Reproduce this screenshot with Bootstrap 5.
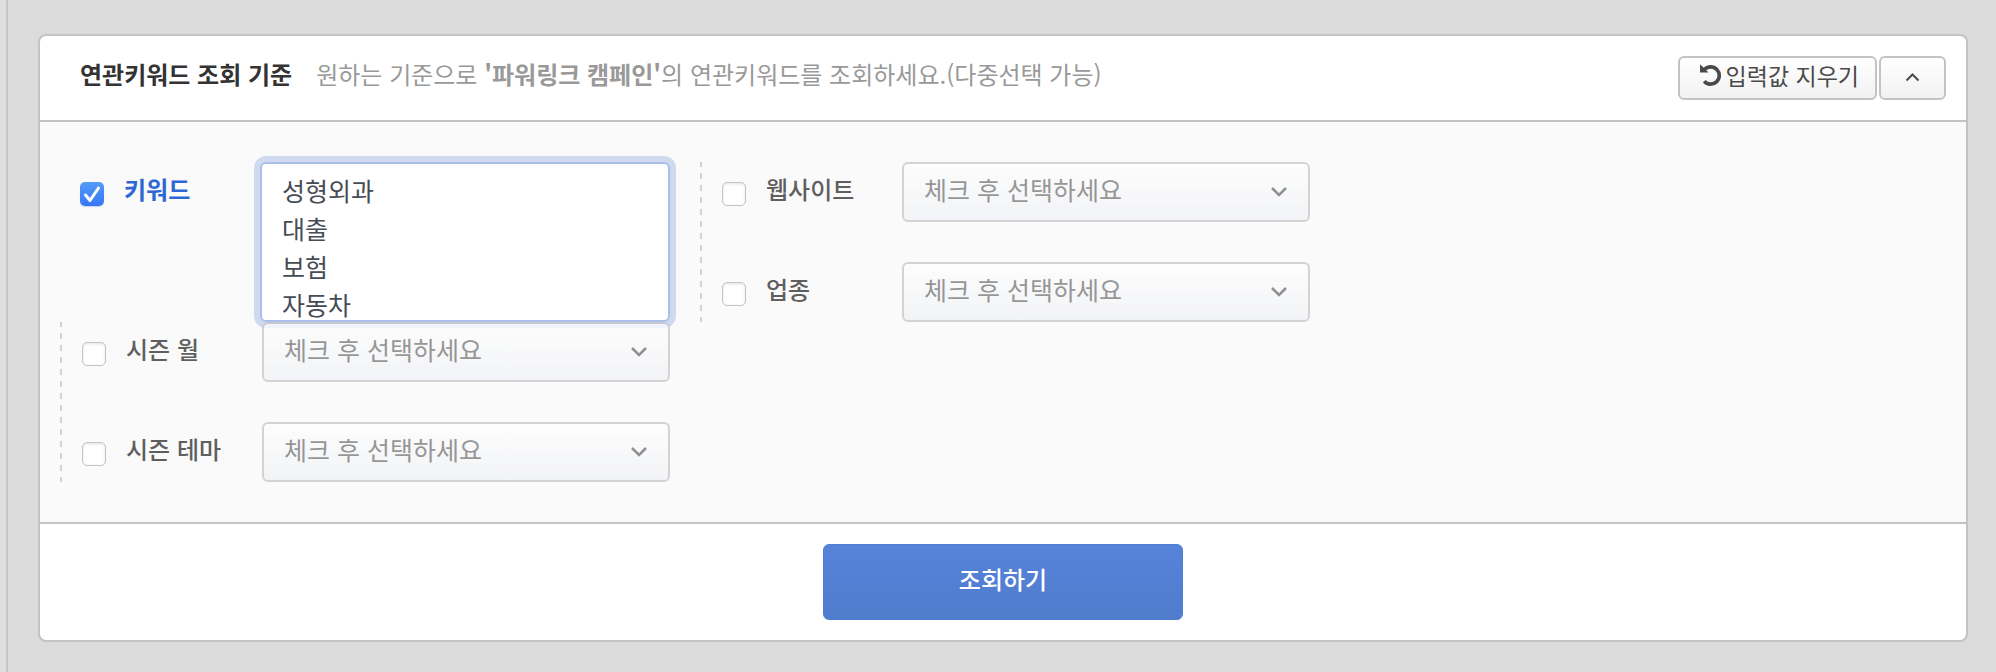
<!DOCTYPE html>
<html lang="ko">
<head>
<meta charset="utf-8">
<meta name="viewport" content="width=device-width, initial-scale=1">
<title>연관키워드 조회 기준</title>
<link href="https://cdn.jsdelivr.net/npm/bootstrap@5.3.0/dist/css/bootstrap.min.css" rel="stylesheet">
<style>
  :root { --line: #c3c3c3; }
  body {
    font-family: "Noto Sans CJK KR", sans-serif;
    font-size: 24px;
    line-height: 36px;
    color: #5f5f5f;
    background: #dbdbdb;
  }
  .side-edge { width: 8px; background: #e0dedb; border-right: 2px solid #c6c6c6; }
  .page-main { padding: 34px 28px 30px 30px; }
  .panel { border: 2px solid var(--line); border-radius: 8px; background: #fff; }
  .panel-head { padding: 20px 20px 20px 40px; border-bottom: 2px solid var(--line); }
  .panel-text { column-gap: 24px; }
  .panel-title { font-size: 24px; line-height: 36px; font-weight: 700; color: #333; }
  .panel-desc { color: #999; }
  .head-actions { gap: 2px; }
  .tool-btn {
    height: 44px;
    padding: 0 16px 6px 20px;
    border: 2px solid var(--line);
    border-radius: 6px;
    background: linear-gradient(#fff, #f2f2f2);
    color: #4a4a4a;
    font-size: 23px;
    line-height: 34px;
  }
  .tool-btn.fold-btn { padding: 0 24px 2px; }
  .panel-filters { padding: 40px 0 40px 20px; background: #fafafa; border-bottom: 2px solid var(--line); }
  .filter-group { flex: 0 0 640px; padding: 0 30px 0 20px; gap: 40px; }
  .filter-group.divided {
    padding-left: 22px;
    background: repeating-linear-gradient(#d2d2d2 0 5px, transparent 5px 11px, #d2d2d2 11px 12px) left top / 2px 100% no-repeat;
  }
  .filter-name { flex: 0 0 180px; gap: 20px; }
  .filter-name label { line-height: 54px; font-weight: 500; }
  .filter-name .form-check-input {
    width: 24px;
    height: 24px;
    margin: 20px 0 0;
    border: 1px solid #c4c4c4;
    border-radius: 5px;
    background-color: #fff;
    box-shadow: inset 0 1px 3px rgba(0, 0, 0, .12);
  }
  .filter-name .form-check-input:checked {
    border: 0;
    background: url("data:image/svg+xml,%3Csvg xmlns='http://www.w3.org/2000/svg' viewBox='0 0 24 24'%3E%3Cpath d='M5.5 13l4.5 5.5L18.5 6' fill='none' stroke='%23fff' stroke-width='3' stroke-linecap='round' stroke-linejoin='round'/%3E%3C/svg%3E") center / 24px 24px no-repeat, linear-gradient(#549bf8, #3577f5);
    box-shadow: 0 1px 1px rgba(53, 119, 245, .3);
  }
  .filter-name input:checked + label { color: #2f66d6; font-weight: 700; }
  .keyword-box {
    height: 160px;
    padding: 7px 20px 0;
    border: 2px solid #a9c1ea;
    border-radius: 6px;
    background: #fff;
    color: #464c55;
    font-size: 25px;
    line-height: 38px;
    resize: none;
    overflow: hidden;
  }
  .keyword-box, .keyword-box:focus { box-shadow: 0 0 0 6px #cfdaef; border-color: #a9c1ea; color: #464c55; }
  .pick-box, .pick-box:disabled {
    height: 60px;
    padding: 0 56px 6px 20px;
    border: 2px solid var(--line);
    border-radius: 6px;
    background: url("data:image/svg+xml,%3Csvg xmlns='http://www.w3.org/2000/svg' viewBox='0 0 18 12'%3E%3Cpath d='M2 2l7 7 7-7' fill='none' stroke='%23666' stroke-width='2.5'/%3E%3C/svg%3E") right 20px center / 18px 12px no-repeat, linear-gradient(#fff, #eff1f5);
    color: #6c6c6c;
    font-size: 25px;
    line-height: 38px;
    opacity: .7;
  }
  .panel-foot { padding: 20px; }
  .search-btn {
    width: 360px;
    height: 76px;
    padding: 0 0 6px;
    border: 1px solid #4f7ed0;
    border-radius: 6px;
    background: linear-gradient(#5583da, #507ccc);
    color: #fff;
    font-size: 24px;
    font-weight: 500;
  }
</style>
</head>
<body>
<div class="d-flex min-vh-100">
  <div class="side-edge flex-shrink-0"></div>
  <main class="page-main flex-grow-1">
    <form class="panel overflow-hidden">
      <header class="panel-head d-flex align-items-start justify-content-between">
        <div class="panel-text d-flex flex-wrap">
          <h1 class="panel-title m-0">연관키워드 조회 기준</h1>
          <p class="panel-desc m-0">원하는 기준으로 <strong>'파워링크 캠페인'</strong>의 연관키워드를 조회하세요.(다중선택 가능)</p>
        </div>
        <div class="head-actions d-flex flex-shrink-0">
          <button type="reset" class="btn tool-btn d-flex align-items-center gap-1">
            <svg width="22" height="22" viewBox="0 0 22 22" aria-hidden="true">
              <path d="M4.5 5.5A8.6 8.6 0 1 1 4.2 17.2" fill="none" stroke="#4a4a4a" stroke-width="3.6"/>
              <path d="M0 .5l2.500 2 6 6H0z" fill="#4a4a4a"/>
            </svg>
            <span>입력값 지우기</span>
          </button>
          <button type="button" class="btn tool-btn fold-btn d-flex align-items-center" aria-label="접기">
            <svg width="15" height="10" viewBox="0 0 15 10" aria-hidden="true">
              <path d="M1.5 8.5l6-6 6 6" fill="none" stroke="#4a4a4a" stroke-width="2"/>
            </svg>
          </button>
        </div>
      </header>

      <div class="panel-filters d-flex flex-wrap">
        <div class="filter-group d-flex">
          <div class="d-flex w-100">
            <div class="filter-name d-flex align-items-start">
              <input class="form-check-input" type="checkbox" id="use-keyword" checked>
              <label for="use-keyword">키워드</label>
            </div>
            <textarea class="form-control keyword-box" aria-label="키워드 입력" spellcheck="false">성형외과
대출
보험
자동차</textarea>
          </div>
        </div>

        <div class="filter-group divided d-flex flex-column">
          <div class="d-flex">
            <div class="filter-name d-flex align-items-start">
              <input class="form-check-input" type="checkbox" id="use-site">
              <label for="use-site">웹사이트</label>
            </div>
            <select class="form-select pick-box" aria-label="웹사이트 선택" disabled><option>체크 후 선택하세요</option></select>
          </div>
          <div class="d-flex">
            <div class="filter-name d-flex align-items-start">
              <input class="form-check-input" type="checkbox" id="use-industry">
              <label for="use-industry">업종</label>
            </div>
            <select class="form-select pick-box" aria-label="업종 선택" disabled><option>체크 후 선택하세요</option></select>
          </div>
        </div>

        <div class="filter-group divided d-flex flex-column">
          <div class="d-flex">
            <div class="filter-name d-flex align-items-start">
              <input class="form-check-input" type="checkbox" id="use-month">
              <label for="use-month">시즌 월</label>
            </div>
            <select class="form-select pick-box" aria-label="시즌 월 선택" disabled><option>체크 후 선택하세요</option></select>
          </div>
          <div class="d-flex">
            <div class="filter-name d-flex align-items-start">
              <input class="form-check-input" type="checkbox" id="use-theme">
              <label for="use-theme">시즌 테마</label>
            </div>
            <select class="form-select pick-box" aria-label="시즌 테마 선택" disabled><option>체크 후 선택하세요</option></select>
          </div>
        </div>
      </div>

      <footer class="panel-foot text-center d-flex justify-content-center">
        <button type="submit" class="btn search-btn">조회하기</button>
      </footer>
    </form>
  </main>
</div>
<script src="https://cdn.jsdelivr.net/npm/bootstrap@5.3.0/dist/js/bootstrap.bundle.min.js"></script>
</body>
</html>
